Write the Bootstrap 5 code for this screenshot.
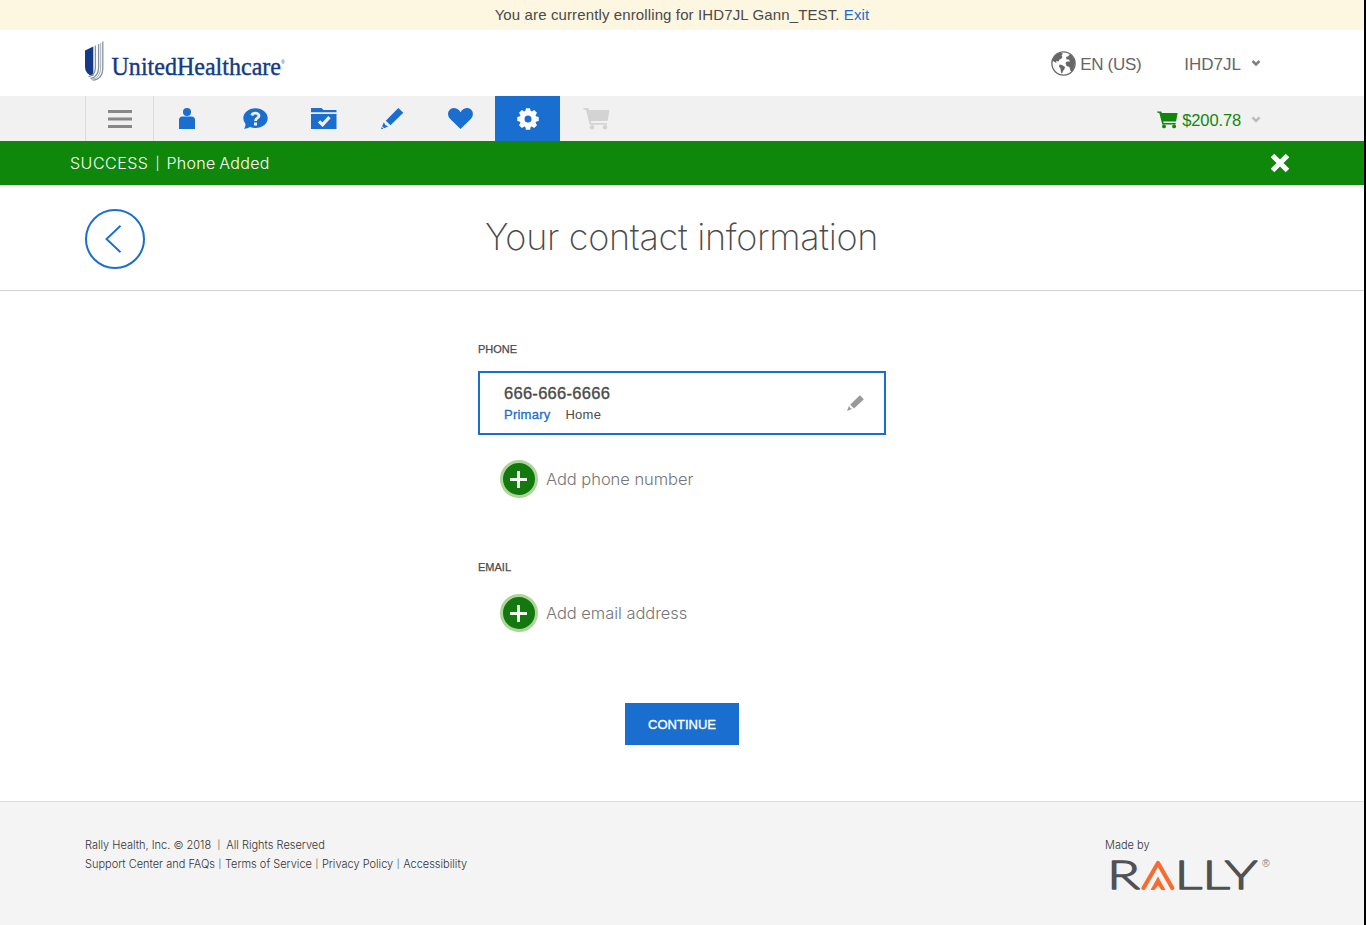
<!DOCTYPE html>
<html lang="en">
<head>
<meta charset="utf-8">
<title>Your contact information</title>
<link href="https://cdn.jsdelivr.net/npm/bootstrap@5.3.0/dist/css/bootstrap.min.css" rel="stylesheet">
<style>
body{font-family:"Liberation Sans",Arial,sans-serif;color:#4a4a4a;min-height:925px;border-right:2px solid #000;overflow:hidden;background:#fff;line-height:1.25}
a{text-decoration:none}
svg{display:block;flex:none;overflow:visible}
.thin-face{font-family:Inter,Roboto,sans-serif;font-weight:300}
.page-wrap{width:1194px;margin:0 auto}
.enroll-bar{height:30px;background:#fdf6e0;font-size:15px;letter-spacing:.12px}
.enroll-bar a,.blue-text{color:#196ecf}
.brand-bar{height:66px}
.user-menu{font-size:17px;color:#666;margin-right:18px}
.user-menu span{padding-top:3px}
.lang-name{margin-left:4px;letter-spacing:-.3px}
.user-name{margin-left:43px}
.chev{margin-left:10px}
.tool-bar{height:45px;background:#f1f1f1}
.tool-item{width:68.4px;color:#196ecf}
.tool-menu{width:69px;border-left:1px solid #dcdcdc;border-right:1px solid #dcdcdc;color:#888;margin-right:-1px}
.tool-active{width:65px;background:#196ecf;color:#fff;padding-left:1px}
.tool-off{color:#d3d3d3;margin-left:23px}
.cart-total{color:#0f870b;font-size:16.5px;margin-right:18px;padding-top:3px;letter-spacing:-.13px}
.success-bar{height:44px;background:#0f870b;color:#fff;font-size:16px;padding-left:70px;padding-right:74px;word-spacing:-1px}
.success-word{letter-spacing:.5px}
.success-note{letter-spacing:.3px}
.bar-sep{font-size:.8em;position:relative;top:-.07em}
.title-bar{height:106px;border-bottom:1px solid #d3d3d3}
.title-bar h1{font-size:36px;font-weight:200;color:#4a4a4a;letter-spacing:-.3px;margin-right:61px}
.back-btn{width:60px;height:60px;border:2px solid #196ecf;color:#196ecf;margin-top:2px;padding-right:5px}
.form-col{width:408px;margin:0 auto;height:510px;padding-top:50px}
.field-label{font-size:11px;line-height:16px;font-weight:400;-webkit-text-stroke:.25px currentColor}
.phone-card{height:64px;border:2px solid #196ecf;padding:0 20px 0 24px;margin-top:14px}
.phone-num{font-size:16.5px;line-height:20px;letter-spacing:.28px;-webkit-text-stroke:.35px currentColor}
.phone-meta{font-size:13px;line-height:18px;margin-top:3px;letter-spacing:.24px;gap:15px}
.phone-meta .blue-text{-webkit-text-stroke:.3px currentColor}
.add-link{color:#757575;font-size:16.5px;letter-spacing:-.05px;padding-left:22px;height:38px;gap:8px}
.btn-go{width:114px;height:42px;background:#196ecf;color:#fff;font-size:13px;border-radius:0;padding:2px 0 0;margin-top:71px;-webkit-text-stroke:.35px currentColor}
.site-foot{height:124px;background:#f4f4f4;border-top:1px solid #dedede;font-size:11px;line-height:19px;color:#333;padding-top:34px}
.foot-nav .bar-sep{margin:0 .5px}
.made-by{width:174px}
</style>
</head>
<body class="d-flex flex-column">
<div class="enroll-bar d-flex justify-content-center align-items-center"><span>You are currently enrolling for IHD7JL Gann_TEST. <a href="#">Exit</a></span></div>
<header class="brand-bar"><div class="page-wrap h-100 d-flex justify-content-between align-items-center">
<svg width="204" height="44" viewBox="85 41 204 44" role="img" aria-label="UnitedHealthcare">
<path fill="#153a85" d="M85 50.500L93.300 46.500V76Q85 74.500 85 67Z"/>
<path fill="none" stroke="#8692a2" stroke-width="1.300" d="M95.400 45.500V67Q95.400 75.500 88.500 76.700M98.600 44V67Q98.600 77 90.500 78.500M102.800 41.500V67Q103 79.500 92.500 80.200"/>
<path fill="none" stroke="#a5adba" stroke-width="1" d="M100.700 43V67Q100.500 78.500 91.500 79.400"/>
<text x="111.500" y="75.200" font-family="Liberation Serif,serif" font-size="25.500" fill="#153a85" stroke="#153a85" stroke-width=".4" textLength="169.500" lengthAdjust="spacingAndGlyphs">UnitedHealthcare</text>
<text x="281.300" y="63.500" font-family="Liberation Sans,sans-serif" font-size="4.500" fill="#153a85">®</text>
</svg>
<div class="user-menu d-flex align-items-center">
<svg width="25" height="25" viewBox="0 0 25 25"><circle cx="12.500" cy="12.500" r="11.600" fill="none" stroke="currentColor" stroke-width="1.300"/><path fill="currentColor" d="M2 8L5 3.500 9 1.800 12 2.500 10.500 4.500 11.500 6 10 8 8.500 8.500 7.500 10.500 5 10 5.500 12 3.500 11 2 10ZM8.500 13.500L11 14 14 16 13.500 18 12 20 11 22.500 10 21.500 9.500 17.500 8 15.500ZM15 6L18 5 17.500 3.500 20 4 23.500 9 24 12 23 16 21.500 20 19.500 20 18.500 16 15.500 15 14.500 12 16 10.500 19 10.500 18 8.500 15.500 8.500Z"/></svg>
<span class="lang-name">EN (US)</span><span class="user-name">IHD7JL</span>
<svg class="chev" width="10" height="8" viewBox="0 0 10 8"><path d="M1.500 2L5 5.500 8.500 2" fill="none" stroke="#808080" stroke-width="2.500"/></svg>
</div></div></header>
<nav class="tool-bar"><div class="page-wrap h-100 d-flex align-items-stretch">
<a href="#" class="tool-menu d-flex align-items-center justify-content-center"><svg width="24" height="20" viewBox="0 0 24 20"><path fill="currentColor" d="M0 1h24v3H0zM0 8.500h24v3H0zM0 16h24v3H0z"/></svg></a>
<a href="#" class="tool-item d-flex align-items-center justify-content-center"><svg width="16" height="22" viewBox="0 0 16 22"><circle cx="8" cy="4" r="4" fill="currentColor"/><path fill="currentColor" d="M0 12Q0 8.500 3.500 8.500H12.500Q16 8.500 16 12V21H0Z"/></svg></a>
<a href="#" class="tool-item d-flex align-items-center justify-content-center"><svg width="25" height="22" viewBox="0 0 25 22"><path fill="currentColor" d="M12.500.3C19.300.3 24.700 4.800 24.700 10.200S19.300 20 12.500 20Q9.500 20 7 19.100 4.500 20.800 1 20.700 2.700 18.500 2.500 16 .3 13.400.3 10.200C.3 4.800 5.700.3 12.500.3Z"/><path fill="none" stroke="#f1f1f1" stroke-width="2.800" d="M8.800 7.500Q9.500 5.200 12.400 5.200T16 7.700C16 10 12.500 9.800 12.500 13"/><path fill="#f1f1f1" d="M11 14.500h3v3h-3z"/></svg></a>
<a href="#" class="tool-item d-flex align-items-center justify-content-center"><svg width="26" height="22" viewBox="0 0 26 22"><path fill="currentColor" d="M0 0H10.500L12.500 2H25.500V4.300H0ZM0 6H25.500V21H0Z"/><path fill="none" stroke="#f1f1f1" stroke-width="3.200" d="M8 13.300L11.600 16.700 18.500 9.200"/></svg></a>
<a href="#" class="tool-item d-flex align-items-center justify-content-center"><svg width="23" height="22" viewBox="0 0 23 22"><path fill="currentColor" d="M17.300 0L22.300 4.800 9.500 17.300 4.800 12.700ZM2.800 14.200L4.500 17.300 7.400 18.200 3.200 20.200 1.200 18.200ZM.8 19L2.500 20.700 0 21.200Z"/></svg></a>
<a href="#" class="tool-item d-flex align-items-center justify-content-center"><svg width="25" height="22" viewBox="0 0 25 22"><path fill="currentColor" d="M12.500 21L2 10.800C-3 5 2.500-2.500 9 .7Q11.500 2 12.500 4.300 13.500 2 16 .7C22.500-2.500 28 5 23 10.800Z"/></svg></a>
<a href="#" class="tool-active d-flex align-items-center justify-content-center"><svg width="22" height="22" viewBox="-11 -11 22 22"><g fill="#fff"><circle r="8.300"/><g id="tooth"><path id="t" d="M-3-7L-2-10.700H2L3-7ZM-3 7L-2 10.700H2L3 7Z"/><use href="#t" transform="rotate(90)"/></g><use href="#tooth" transform="rotate(45)"/></g><circle r="3.500" fill="#196ecf"/></svg></a>
<a href="#" class="tool-off d-flex align-items-center"><svg width="27" height="22" viewBox="0 0 27 22"><path fill="currentColor" d="M0 0H5.500L6.300 2H26.500L24.500 13H8L8.300 15H24V16.700H6.800L3 2 .7 1.600Z"/><circle cx="9" cy="19.200" r="2.200" fill="currentColor"/><circle cx="22" cy="19.200" r="2.200" fill="currentColor"/></svg></a>
<div class="cart-total ms-auto d-flex align-items-center"><svg width="21" height="18" viewBox="0 0 27 22"><path fill="currentColor" d="M0 0H5.500L6.300 2H26.500L24.500 13H8L8.300 15H24V16.700H6.800L3 2 .7 1.600Z"/><circle cx="9" cy="19.200" r="2.500" fill="currentColor"/><circle cx="22" cy="19.200" r="2.500" fill="currentColor"/></svg><span class="ms-1">$200.78</span><svg class="chev" width="10" height="8" viewBox="0 0 10 8"><path d="M1.500 1.500L5 5 8.500 1.500" fill="none" stroke="#bcbcbc" stroke-width="2.500"/></svg></div>
</div></nav>
<div class="success-bar thin-face d-flex align-items-center justify-content-between"><span><span class="success-word">SUCCESS</span> &nbsp;<span class="bar-sep">|</span>&nbsp; <span class="success-note">Phone Added</span></span><svg width="20" height="20" viewBox="0 0 20 20"><path fill="none" stroke="#fff" stroke-width="5" d="M2.500 2.500L17.500 17.500M17.500 2.500L2.500 17.500"/></svg></div>
<div class="title-bar"><div class="page-wrap h-100 d-flex align-items-center">
<a href="#" class="back-btn rounded-circle d-flex align-items-center justify-content-center"><svg width="18" height="28" viewBox="0 0 18 28"><path fill="none" stroke="currentColor" stroke-width="1.900" d="M16.500.8L2.500 14 16.500 27.200"/></svg></a>
<h1 class="thin-face flex-grow-1 text-center mb-0">Your contact information</h1></div></div>
<main class="form-col d-flex flex-column">
<div class="field-label">PHONE</div>
<div class="phone-card d-flex align-items-center justify-content-between"><div><div class="phone-num">666-666-6666</div><div class="phone-meta d-flex"><span class="blue-text">Primary</span><span>Home</span></div></div>
<svg width="17" height="17" viewBox="0 0 23 22"><path fill="#999" d="M17.300 0L22.800 5.300 9.500 17.800 4.300 12.700ZM2.800 14.200L4.500 17.300 7.400 18.200 0 21.200Z"/></svg></div>
<a href="#" class="add-link thin-face d-flex align-items-center" style="margin-top:25px"><svg width="38" height="38" viewBox="0 0 38 38"><circle cx="19" cy="19" r="17.500" fill="#13780e" stroke="#add59a" stroke-width="3"/><path fill="#f2faf1" d="M17 11h3v7h7v3h-7v7h-3v-7h-7v-3h7z"/></svg><span>Add phone number</span></a>
<div class="field-label" style="margin-top:61px">EMAIL</div>
<a href="#" class="add-link thin-face d-flex align-items-center" style="margin-top:19px"><svg width="38" height="38" viewBox="0 0 38 38"><circle cx="19" cy="19" r="17.500" fill="#13780e" stroke="#add59a" stroke-width="3"/><path fill="#f2faf1" d="M17 11h3v7h7v3h-7v7h-3v-7h-7v-3h7z"/></svg><span>Add email address</span></a>
<button class="btn btn-go align-self-center border-0">CONTINUE</button>
</main>
<footer class="site-foot thin-face"><div class="page-wrap d-flex justify-content-between">
<div><div>Rally Health, Inc. © 2018 &nbsp;<span class="bar-sep">|</span>&nbsp; All Rights Reserved</div><div class="foot-nav">Support Center and FAQs <span class="bar-sep">|</span> Terms of Service <span class="bar-sep">|</span> Privacy Policy <span class="bar-sep">|</span> Accessibility</div></div>
<div class="made-by"><div>Made by</div>
<svg width="174" height="50" viewBox="1105 855 174 50" role="img" aria-label="Rally"><g font-family="Lato,sans-serif" font-size="39" fill="#505153" stroke="#505153" stroke-width="1.300" stroke-linejoin="round"><text x="1107" y="889.300" textLength="33" lengthAdjust="spacingAndGlyphs">R</text><text x="1174.500" y="889.300" textLength="83" lengthAdjust="spacingAndGlyphs">LLY</text></g><path fill="none" stroke="#f76b31" stroke-width="4.200" stroke-linejoin="round" stroke-linecap="round" d="M1143.500 888L1158 863 1172.300 888"/><path fill="#f76b31" d="M1150.500 890L1158 876.500 1165.500 890 1161.500 890 1158 885.500 1154.500 890Z"/><text x="1262" y="867" font-family="Liberation Sans,sans-serif" font-size="10.500" fill="#888">®</text></svg></div>
</div></footer>
<script src="https://cdn.jsdelivr.net/npm/bootstrap@5.3.0/dist/js/bootstrap.bundle.min.js"></script>
</body>
</html>
